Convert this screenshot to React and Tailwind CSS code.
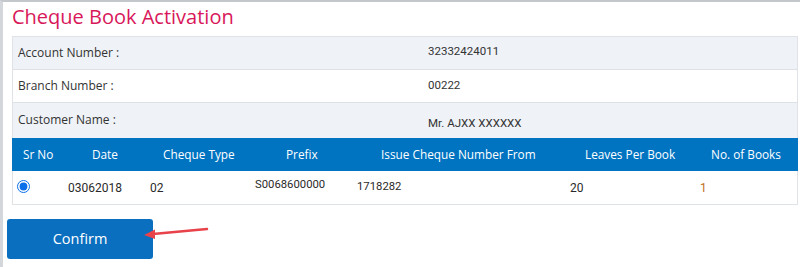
export default function App() {
  const headers = [
    ["Sr No", "pl-[11px]"],
    ["Date", "pl-[32px]"],
    ["Cheque Type", "pl-[23px]"],
    ["Prefix", "pl-[36px]"],
    ["Issue Cheque Number From", "pl-[31px]"],
    ["Leaves Per Book", "pl-[25px]"],
    ["No. of Books", "pl-[16px]"],
  ];
  return (
    <div className="relative w-[800px] h-[267px] overflow-hidden bg-white border-t-2 border-t-[#c4c8cc] border-l-[3px] border-l-[#d3d7db] font-['Open_Sans',sans-serif]">
      <div className="pl-[9px]">
        <h1 className="mt-px text-[20px] leading-[28px] text-[#d8175a] font-normal">Cheque Book Activation</h1>
        <div className="mt-[5px] w-[786px] border border-[#dfe3e8] border-b-0">
          <div className="flex items-center h-[33px] bg-[#eff2f7] border-b border-[#dde1e6] text-[12px] text-[#333]">
            <div className="w-[415px] pl-[5px]">Account Number :</div>
            <div className="font-['Roboto',sans-serif] text-[11.5px] text-[#333] mb-[2px]">32332424011</div>
          </div>
          <div className="flex items-center h-[33px] bg-white border-b border-[#dde1e6] text-[12px] text-[#333]">
            <div className="w-[415px] pl-[5px]">Branch Number :</div>
            <div className="font-['Roboto',sans-serif] text-[11.5px] text-[#333]">00222</div>
          </div>
          <div className="flex items-center h-[35px] bg-[#eff2f7] text-[12px] text-[#333]">
            <div className="w-[415px] pl-[5px] mb-[2px]">Customer Name :</div>
            <div className="font-['Roboto',sans-serif] text-[11.5px] text-[#333] mt-[6px]">Mr. AJXX XXXXXX</div>
          </div>
        </div>
        <div className="w-[786px]">
          <div className="grid grid-cols-[48px_80px_110px_100px_210px_135px_1fr] items-center h-[33px] bg-[#0073c1] text-white text-[11.8px]">
            {headers.map(([h, p]) => (
              <div key={h} className={p + " whitespace-nowrap"}>{h}</div>
            ))}
          </div>
          <div className="grid grid-cols-[47px_80px_110px_100px_210px_135px_1fr] items-center h-[34px] border border-t-0 border-[#e0e3e6] font-['Roboto',sans-serif] text-[12px] text-[#2a2a2a]">
            <div className="pl-[4px] flex items-center mb-[3px]">
              <input type="radio" checked readOnly className="w-[13px] h-[13px] m-0 accent-[#0a6fe8]" />
            </div>
            <div className="pl-[8px]">03062018</div>
            <div className="pl-[10px]">02</div>
            <div className="pl-[5px] text-[11.3px] mb-[4px]">S0068600000</div>
            <div className="pl-[7px] text-[11.3px]">1718282</div>
            <div className="pl-[10px]">20</div>
            <div className="pl-[5px] text-[#c0701c]">1</div>
          </div>
        </div>
      </div>
      <div className="pl-[4px] mt-[14px]">
        <button className="w-[146px] h-[40px] rounded-[3px] bg-[#0a6fbf] text-white text-[14.5px] font-['Open_Sans',sans-serif]">Confirm</button>
      </div>
      <svg className="absolute left-0 top-0" width="800" height="267" viewBox="0 0 800 267">
        <line x1="204" y1="227" x2="150" y2="232" stroke="#e8424a" strokeWidth="2.5" strokeLinecap="round" />
        <polygon points="141,233 152,227.5 152,237" fill="#e8424a" />
      </svg>
    </div>
  );
}
